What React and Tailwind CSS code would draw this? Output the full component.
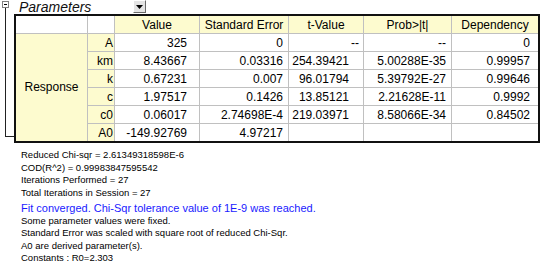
const rows = [
  { label: "A", v: ["325", "0", "--", "--", "0"] },
  { label: "km", v: ["8.43667", "0.03316", "254.39421", "5.00288E-35", "0.99957"] },
  { label: "k", v: ["0.67231", "0.007", "96.01794", "5.39792E-27", "0.99646"] },
  { label: "c", v: ["1.97517", "0.1426", "13.85121", "2.21628E-11", "0.9992"] },
  { label: "c0", v: ["0.06017", "2.74698E-4", "219.03971", "8.58066E-34", "0.84502"] },
  { label: "A0", v: ["-149.92769", "4.97217", "", "", ""] },
];

const headers = ["Value", "Standard Error", "t-Value", "Prob>|t|", "Dependency"];

// right padding per value column, read off the screenshot
const padding = ["pr-[12px]", "pr-[5px]", "pr-[14px]", "pr-[5px]", "pr-[8px]"];

const notes = [
  "Reduced Chi-sqr = 2.61349318598E-6",
  "COD(R^2) = 0.99983847595542",
  "Iterations Performed = 27",
  "Total Iterations in Session = 27",
];

const notesAfter = [
  "Some parameter values were fixed.",
  "Standard Error was scaled with square root of reduced Chi-Sqr.",
  "A0 are derived parameter(s).",
  "Constants : R0=2.303",
];

const ParamTable = () => {
  return (
    <div className="grid grid-cols-[72px_27px_85px_89px_75px_88px_86px] grid-rows-[repeat(6,18px)_17px] border-2 border-[#111] w-[526px] text-[12px] text-black">
      <div className="border-r border-b border-[#c0c0c0] bg-white" />
      <div className="border-r border-b border-[#c0c0c0] bg-white" />
      {headers.map((h, i) => (
        <div
          key={h}
          className={`flex items-center justify-center bg-[#fdfbcf] border-b border-[#c0c0c0] ${i < 4 ? "border-r" : ""}`}
        >
          {h}
        </div>
      ))}

      <div className="row-span-6 flex items-center justify-center bg-[#fdfbcf] border-r border-[#c0c0c0] pb-[1px]">
        Response
      </div>

      {rows.map((row, r) => {
        const last = r === rows.length - 1;
        return [
          <div
            key={row.label}
            className={`flex items-center justify-end pr-[1px] bg-[#fdfbcf] border-r border-[#c0c0c0] ${last ? "" : "border-b"}`}
          >
            {row.label}
          </div>,
          ...row.v.map((val, i) => (
            <div
              key={row.label + i}
              className={`flex items-center justify-end bg-white border-[#c0c0c0] ${i < 4 ? "border-r" : ""} ${last ? "" : "border-b"} ${
                val === "--" && i === 2 ? "pr-[4px]" : padding[i]
              }`}
            >
              {val}
            </div>
          )),
        ];
      })}
    </div>
  );
};

export default function App() {
  return (
    <div className="w-[546px] h-[269px] bg-white overflow-hidden font-['Liberation_Sans',Arial,sans-serif] text-black">
      <div className="flex h-[14px]">
        <div className="flex flex-col items-start w-[14px] pl-[2px] pt-[1px]">
          <div className="w-[7px] h-[7px] border border-[#808080] flex items-center justify-center bg-white">
            <div className="w-[3px] h-px bg-black" />
          </div>
          <div className="ml-[3px] w-px flex-1 bg-[#222]" />
        </div>
        <div className="ml-[5px] italic text-[14px] leading-[14px] text-[#111] w-[114px]">Parameters</div>
        <div className="w-[13px] h-[13px] bg-[#e4e4e4] border border-t-white border-l-white border-r-[#6a6a6a] border-b-[#6a6a6a] flex items-center justify-center">
          <svg width="7" height="4" viewBox="0 0 7 4">
            <path d="M0 0h7L3.5 4z" fill="#000" />
          </svg>
        </div>
      </div>

      <div className="flex">
        <div className="w-[14px]">
          <div className="ml-[5px] w-[9px] h-[123px] border-l border-b border-[#222]" />
        </div>
        <ParamTable />
      </div>

      <div className="pl-[21px] mt-[6px] text-[9.5px] leading-[12.5px]">
        {notes.map((n) => (
          <div key={n}>{n}</div>
        ))}
        <div className="mt-[3px] text-[11px] text-[#1a1aff]">
          Fit converged. Chi-Sqr tolerance value of 1E-9 was reached.
        </div>
        {notesAfter.map((n) => (
          <div key={n}>{n}</div>
        ))}
      </div>
    </div>
  );
}
